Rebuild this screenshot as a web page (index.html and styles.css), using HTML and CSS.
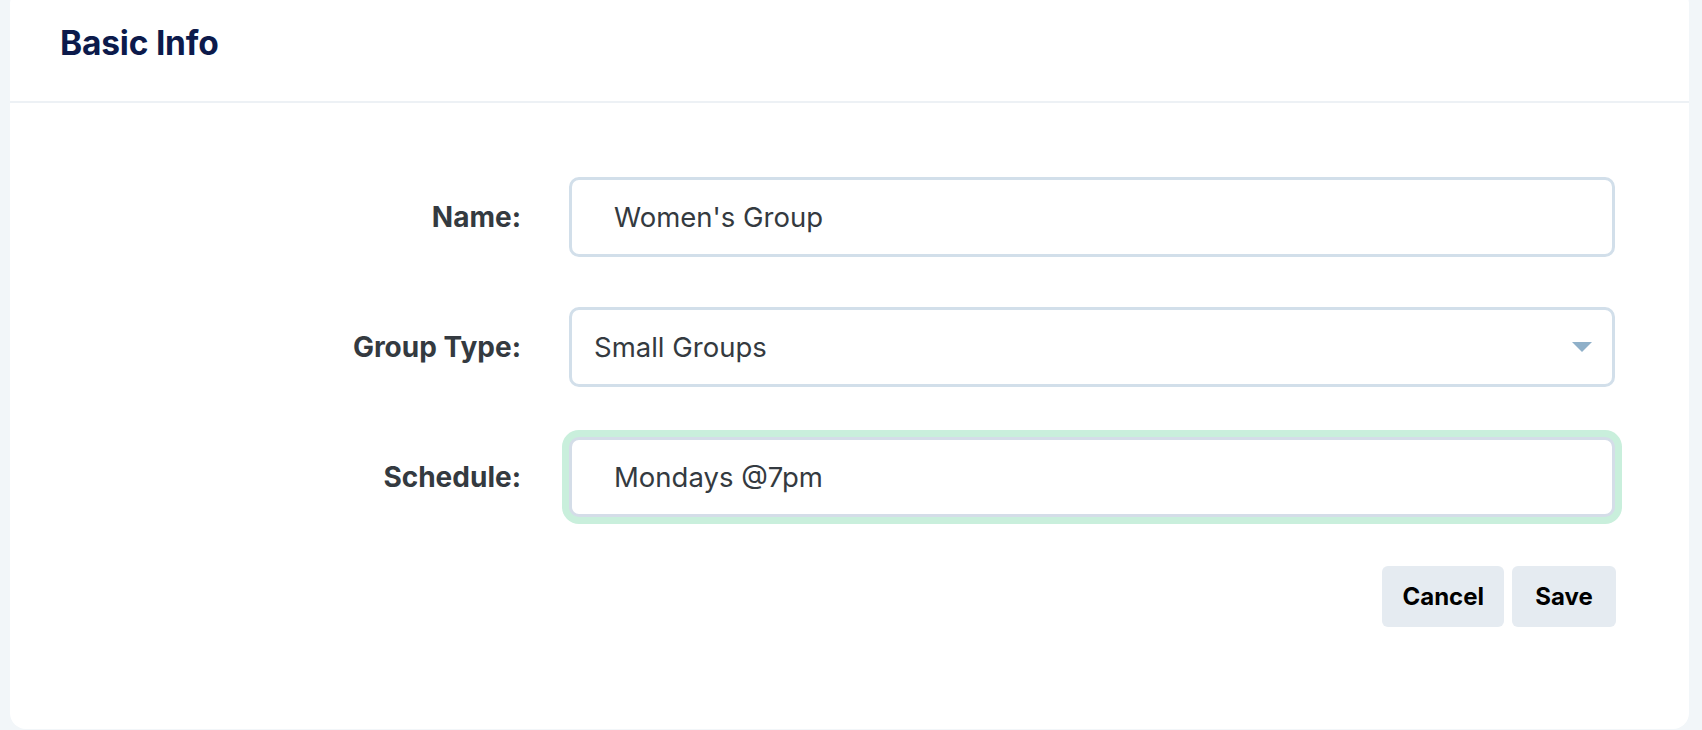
FILE: index.html
```html
<!DOCTYPE html>
<html lang="en">
<head>
<meta charset="utf-8">
<title>Basic Info</title>
<link rel="stylesheet" href="styles.css">
</head>
<body>
<div class="card">
  <div class="card-header">
    <h2 class="card-title">Basic Info</h2>
  </div>
  <form class="card-body">
    <label class="form-label" for="name">Name:</label>
    <input class="form-input form-input--wide" id="name" type="text" value="Women's Group">

    <label class="form-label" for="gtype">Group Type:</label>
    <div class="select-wrap">
      <select class="form-input form-select" id="gtype">
        <option>Small Groups</option>
      </select>
      <svg class="select-arrow" width="20" height="10" viewBox="0 0 20 10"><path d="M0 0 H20 L10 10 Z" fill="#8fb0c9"/></svg>
    </div>

    <label class="form-label" for="sched">Schedule:</label>
    <input class="form-input form-input--wide is-focused" id="sched" type="text" value="Mondays @7pm">

    <div class="form-actions">
      <button type="button" class="btn">Cancel</button>
      <button type="button" class="btn">Save</button>
    </div>
  </form>
</div>
</body>
</html>
```

FILE: styles.css
```css
html, body {
  margin: 0;
  padding: 0;
  background: #f2f6f9;
  font-family: Inter, "Noto Sans", "Liberation Sans", sans-serif;
  overflow: hidden;
}

.card {
  margin: -12px 13px 0 10px;
  height: 741px;
  background: #ffffff;
  border-radius: 16px;
  box-sizing: border-box;
}

.card-header {
  height: 115px;
  box-sizing: border-box;
  border-bottom: 2px solid #edf1f5;
  padding: 35px 0 0 50px;
}

.card-title {
  margin: 0;
  font-size: 33.5px;
  line-height: 40px;
  font-weight: 700;
  color: #0c1a4b;
  letter-spacing: -0.2px;
}

.card-body {
  display: grid;
  grid-template-columns: 437px 1fr;
  column-gap: 48px;
  row-gap: 50px;
  align-items: center;
  padding: 74px 74px 0 74px;
}

.form-label {
  text-align: right;
  font-size: 28px;
  font-weight: 700;
  color: #343a40;
}

.form-input {
  box-sizing: border-box;
  width: 100%;
  height: 80px;
  border: 3px solid #d2dfea;
  border-radius: 10px;
  background: #ffffff;
  font-family: inherit;
  font-size: 27.5px;
  color: #343a40;
  outline: none;
  margin: 0;
}

.form-input--wide {
  padding: 0 20px 0 42px;
}

.is-focused {
  border-color: #d4dde8;
  box-shadow: 0 0 0 7px #c9efdc;
}

.select-wrap {
  position: relative;
}

.form-select {
  appearance: none;
  -webkit-appearance: none;
  padding: 0 60px 0 22px;
}

.select-arrow {
  position: absolute;
  right: 23px;
  top: 35px;
  pointer-events: none;
}

.form-actions {
  grid-column: 1 / -1;
  display: flex;
  justify-content: flex-end;
  gap: 8px;
  margin-top: -1px;
  margin-right: -1px;
}

.btn {
  height: 61px;
  min-width: 104px;
  padding: 0 20px;
  border: none;
  border-radius: 6px;
  background: #e5ebf1;
  font-family: inherit;
  font-size: 24px;
  font-weight: 700;
  color: #000000;
}
```
